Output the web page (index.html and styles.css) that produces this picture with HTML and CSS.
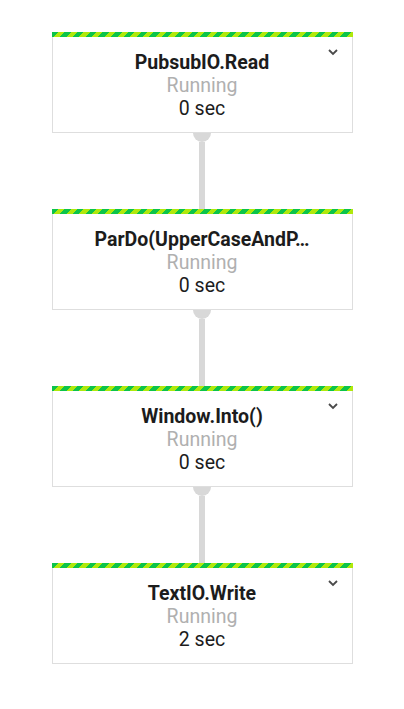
FILE: index.html
```html
<!DOCTYPE html>
<html>
<head>
<meta charset="utf-8">
<link rel="stylesheet" href="styles.css">
</head>
<body>
<div class="graph">
  <div class="card">
    <div class="stripe"></div>
    <div class="title">PubsubIO.Read</div>
    <div class="status">Running</div>
    <div class="time">0 sec</div>
    <svg class="chev" viewBox="0 0 10 7" width="10" height="7"><polyline points="1,1 5,5 9,1"/></svg>
  </div>
  <div class="edge"><div class="knob"></div><div class="stem"></div></div>
  <div class="card">
    <div class="stripe"></div>
    <div class="title">ParDo(UpperCaseAndP…</div>
    <div class="status">Running</div>
    <div class="time">0 sec</div>
  </div>
  <div class="edge"><div class="knob"></div><div class="stem"></div></div>
  <div class="card">
    <div class="stripe"></div>
    <div class="title">Window.Into()</div>
    <div class="status">Running</div>
    <div class="time">0 sec</div>
    <svg class="chev" viewBox="0 0 10 7" width="10" height="7"><polyline points="1,1 5,5 9,1"/></svg>
  </div>
  <div class="edge"><div class="knob"></div><div class="stem"></div></div>
  <div class="card">
    <div class="stripe"></div>
    <div class="title">TextIO.Write</div>
    <div class="status">Running</div>
    <div class="time">2 sec</div>
    <svg class="chev" viewBox="0 0 10 7" width="10" height="7"><polyline points="1,1 5,5 9,1"/></svg>
  </div>
</div>
</body>
</html>
```

FILE: styles.css
```css
html, body {
  margin: 0;
  padding: 0;
  background: #ffffff;
}
body {
  font-family: Roboto, "Liberation Sans", sans-serif;
}
.graph {
  display: flex;
  flex-direction: column;
  align-items: center;
  padding-top: 32px;
}
.card {
  position: relative;
  box-sizing: border-box;
  width: 301px;
  height: 101px;
  border: 1px solid #dedede;
  border-top: none;
  background: #fff;
  display: flex;
  flex-direction: column;
  align-items: center;
  padding-bottom: 12px;
}
.stripe {
  align-self: stretch;
  height: 5px;
  margin: 0 -1px 14px;
  background: repeating-linear-gradient(135deg, #0cc44a 0 4.5px, #b0e80c 4.5px 9px);
}
.title, .status, .time {
  font-size: 19.5px;
  line-height: 23px;
  text-align: center;
  white-space: nowrap;
}
.title {
  font-weight: 700;
  color: #1c1c1c;
}
.status {
  color: #b0b0b0;
}
.time {
  color: #1c1c1c;
}
.chev {
  position: absolute;
  top: 17px;
  right: 14px;
  fill: none;
  stroke: #4a4a4a;
  stroke-width: 1.8;
}
.edge {
  height: 76px;
  display: flex;
  flex-direction: column;
  align-items: center;
}
.knob {
  width: 18px;
  height: 9px;
  border-radius: 0 0 9px 9px;
  background: #d8d8d8;
}
.stem {
  width: 6px;
  flex: 1;
  background: #d8d8d8;
}
```
